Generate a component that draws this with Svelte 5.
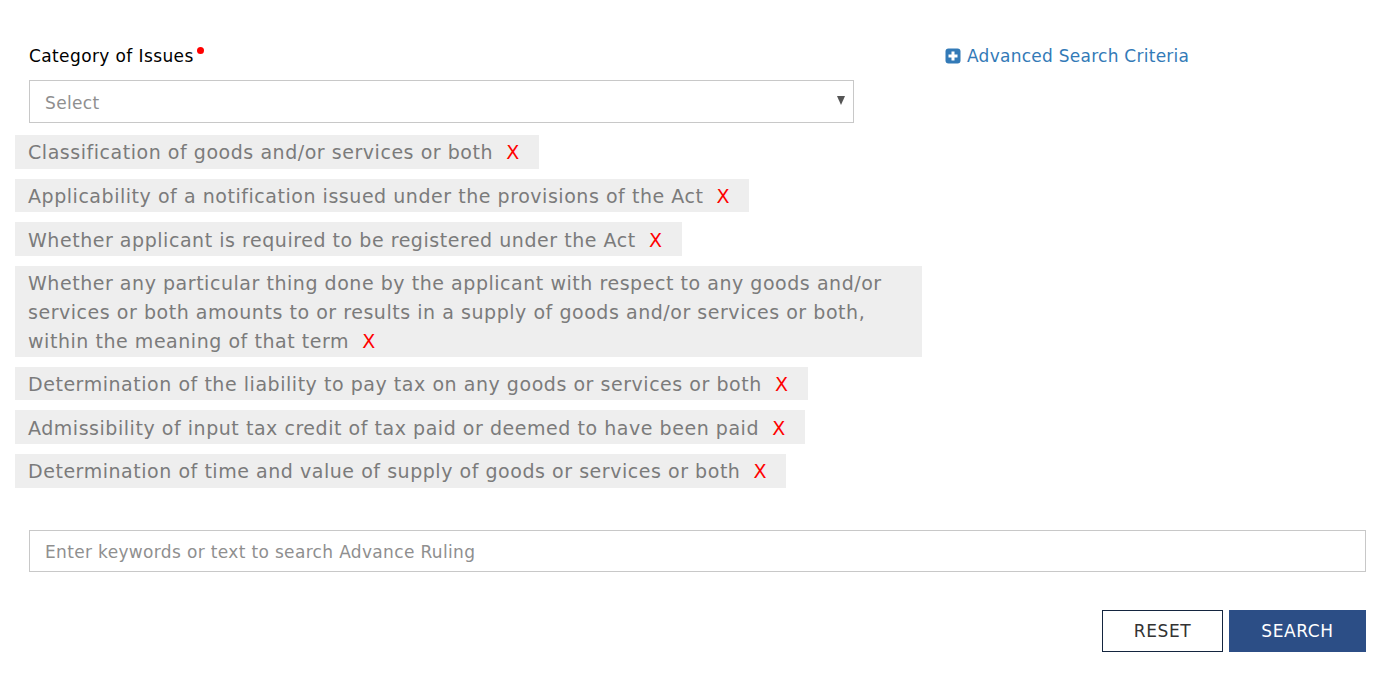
<script>
  const issues = [
    'Classification of goods and/or services or both',
    'Applicability of a notification issued under the provisions of the Act',
    'Whether applicant is required to be registered under the Act',
    'Whether any particular thing done by the applicant with respect to any goods and/or services or both amounts to or results in a supply of goods and/or services or both, within the meaning of that term',
    'Determination of the liability to pay tax on any goods or services or both',
    'Admissibility of input tax credit of tax paid or deemed to have been paid',
    'Determination of time and value of supply of goods or services or both'
  ];
</script>

<main class="page">
  <div class="top">
    <div class="field">
      <label class="label" for="cat">Category of Issues<span class="req"></span></label>
      <div class="select" id="cat">
        <span>Select</span>
        <span class="arrow"></span>
      </div>
    </div>
    <a class="adv" href="#adv">
      <svg width="16" height="16" viewBox="0 0 16 16" aria-hidden="true">
        <rect x="0.5" y="0.5" width="15" height="15" rx="3" fill="#337ab7" />
        <path d="M6.5 3.5h3v3h3v3h-3v3h-3v-3h-3v-3h3z" fill="#fff" />
      </svg>
      Advanced Search Criteria
    </a>
  </div>

  <div class="tags">
    {#each issues as issue}
      <div class="tag">{issue}&nbsp; <span class="x">X</span></div>
    {/each}
  </div>

  <div class="search">Enter keywords or text to search Advance Ruling</div>

  <div class="actions">
    <button class="btn reset">RESET</button>
    <button class="btn go">SEARCH</button>
  </div>
</main>

<style>
  :global(body) {
    margin: 0;
    background: #fff;
  }
  .page {
    width: 1379px;
    height: 678px;
    box-sizing: border-box;
    padding: 40px 13px 0 15px;
    font-family: "DejaVu Sans", Verdana, sans-serif;
    overflow: hidden;
  }
  .top {
    display: flex;
    align-items: flex-start;
  }
  .field {
    width: 839px;
    padding-left: 14px;
    box-sizing: border-box;
  }
  .label {
    display: block;
    height: 40px;
    font-size: 17px;
    line-height: 32px;
    letter-spacing: 0.39px;
    color: #000;
  }
  .req {
    display: inline-block;
    width: 7px;
    height: 7px;
    margin: 0 0 0 3px;
    border-radius: 50%;
    background: #f00;
    vertical-align: 8px;
  }
  .select {
    display: flex;
    justify-content: space-between;
    box-sizing: border-box;
    width: 825px;
    height: 43px;
    padding: 0 8px 0 15px;
    border: 1px solid #c8c8c8;
    font-size: 17px;
    line-height: 42px;
    letter-spacing: 0.34px;
    color: #8f8f8f;
  }
  .select span:first-child {
    padding-top: 1px;
  }
  .arrow {
    width: 0;
    height: 0;
    margin-top: 15px;
    border-left: 4.5px solid transparent;
    border-right: 4.5px solid transparent;
    border-top: 9px solid #555;
  }
  .adv {
    display: flex;
    align-items: center;
    gap: 6px;
    margin-left: 91px;
    font-size: 17px;
    line-height: 32px;
    letter-spacing: 0.26px;
    color: #337ab7;
    text-decoration: none;
  }
  .tags {
    display: flex;
    flex-direction: column;
    align-items: flex-start;
    gap: 10px;
    margin-top: 12px;
  }
  .tag {
    box-sizing: border-box;
    max-width: 907px;
    padding: 3.4px 19px 1.4px 13px;
    background: #eee;
    font-size: 19px;
    line-height: 28.8px;
    letter-spacing: 0.54px;
    color: #7b7b7b;
  }
  .x {
    color: #f00;
  }
  .search {
    box-sizing: border-box;
    height: 42px;
    margin: 42px 0 0 14px;
    padding-left: 15px;
    padding-top: 1px;
    border: 1px solid #c8c8c8;
    font-size: 17px;
    line-height: 41px;
    letter-spacing: 0.34px;
    color: #8f8f8f;
  }
  .actions {
    display: flex;
    justify-content: flex-end;
    gap: 6px;
    margin-top: 38px;
  }
  .btn {
    box-sizing: border-box;
    height: 42px;
    font-family: inherit;
    font-size: 17px;
    letter-spacing: 0.6px;
    padding: 0;
  }
  .reset {
    width: 121px;
    background: #fff;
    border: 1px solid #14253f;
    color: #333;
  }
  .go {
    width: 137px;
    background: #2c4e86;
    border: 1px solid #2c4e86;
    color: #fff;
  }
</style>
